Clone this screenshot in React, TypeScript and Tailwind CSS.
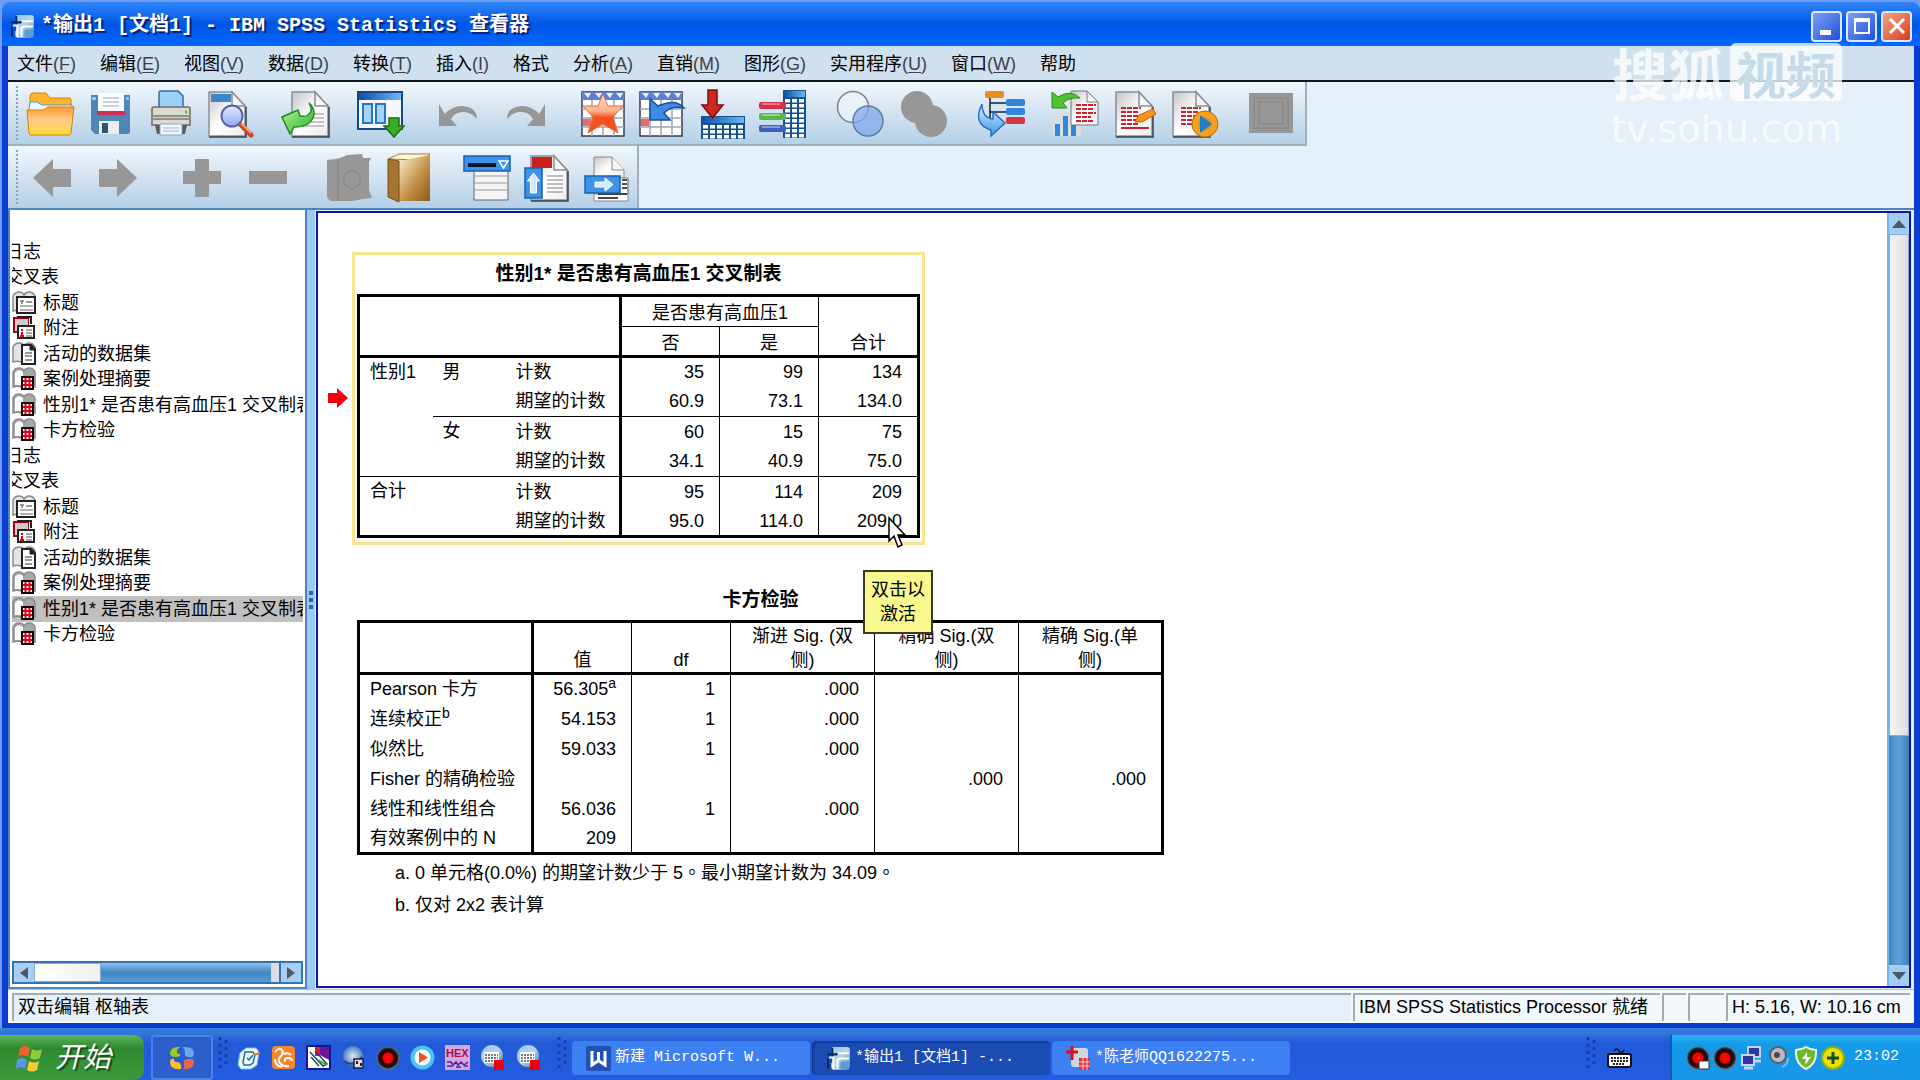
import type { ReactNode } from 'react'
import { clsx } from 'clsx'

const UI_FONT = "font-['Liberation_Sans','Noto_Sans_CJK_SC',sans-serif]"
const MONO_FONT = "font-['Liberation_Mono','Noto_Sans_CJK_SC',monospace]"
const TABLE_FONT = "font-['Liberation_Sans','Noto_Sans_CJK_TC',sans-serif]"

const MENUS: { label: string; key?: string }[] = [
  { label: '文件', key: 'F' },
  { label: '编辑', key: 'E' },
  { label: '视图', key: 'V' },
  { label: '数据', key: 'D' },
  { label: '转换', key: 'T' },
  { label: '插入', key: 'I' },
  { label: '格式' },
  { label: '分析', key: 'A' },
  { label: '直销', key: 'M' },
  { label: '图形', key: 'G' },
  { label: '实用程序', key: 'U' },
  { label: '窗口', key: 'W' },
  { label: '帮助' },
]

/* ---------- shared drawings ---------- */

function Gradients() {
  return (
    <svg width="0" height="0" className="absolute" aria-hidden="true">
      <defs>
        <linearGradient id="gOrange" x1="0" y1="0" x2="0" y2="1">
          <stop offset="0" stopColor="#ff9a2e" />
          <stop offset="0.45" stopColor="#ffc98a" />
          <stop offset="1" stopColor="#ffdf3a" />
        </linearGradient>
        <linearGradient id="gPage" x1="0" y1="0" x2="1" y2="1">
          <stop offset="0" stopColor="#c4c4c4" />
          <stop offset="0.5" stopColor="#ffffff" />
          <stop offset="1" stopColor="#ececec" />
        </linearGradient>
        <linearGradient id="gBlue" x1="0" y1="0" x2="1" y2="0">
          <stop offset="0" stopColor="#0d4fa8" />
          <stop offset="1" stopColor="#6db8f4" />
        </linearGradient>
        <linearGradient id="gSky" x1="0" y1="0" x2="0" y2="1">
          <stop offset="0" stopColor="#d8efff" />
          <stop offset="1" stopColor="#3f95ea" />
        </linearGradient>
        <linearGradient id="gGreen" x1="0" y1="0" x2="1" y2="1">
          <stop offset="0" stopColor="#b4f59a" />
          <stop offset="1" stopColor="#2fb52f" />
        </linearGradient>
        <linearGradient id="gStar" x1="0" y1="0" x2="0" y2="1">
          <stop offset="0" stopColor="#ffe2d0" />
          <stop offset="0.45" stopColor="#fbb08a" />
          <stop offset="0.6" stopColor="#f4511e" />
          <stop offset="1" stopColor="#f4511e" />
        </linearGradient>
        <linearGradient id="gBook" x1="0" y1="0" x2="1" y2="1">
          <stop offset="0" stopColor="#fff3cf" />
          <stop offset="0.6" stopColor="#c08a42" />
          <stop offset="1" stopColor="#8a5a1c" />
        </linearGradient>
        <linearGradient id="gLens" x1="0" y1="0" x2="0" y2="1">
          <stop offset="0" stopColor="#dfe8ff" />
          <stop offset="1" stopColor="#7f9df0" />
        </linearGradient>
        <linearGradient id="gAppTile" x1="0" y1="0" x2="1" y2="1">
          <stop offset="0" stopColor="#8ec8ee" />
          <stop offset="0.5" stopColor="#b9d3e2" />
          <stop offset="1" stopColor="#3c78b4" />
        </linearGradient>
        <radialGradient id="gBall">
          <stop offset="0" stopColor="#ff1010" />
          <stop offset="0.42" stopColor="#f00000" />
          <stop offset="0.55" stopColor="#2a0000" />
          <stop offset="0.8" stopColor="#161616" />
          <stop offset="1" stopColor="#777777" />
        </radialGradient>
        <radialGradient id="gGlobe">
          <stop offset="0" stopColor="#d8ecf8" />
          <stop offset="1" stopColor="#4f7fb8" />
        </radialGradient>
      </defs>
    </svg>
  )
}

function Icon({ w = 48, h = 48, children }: { w?: number; h?: number; children: ReactNode }) {
  return (
    <svg width={w} height={h} viewBox={`0 0 ${w} ${h}`} className="shrink-0" aria-hidden="true">
      {children}
    </svg>
  )
}

function Page({ x = 6 }: { x?: number }) {
  return (
    <g transform={`translate(${x} 1)`}>
      <path d="M1 1h23l13 14v30H1z" fill="url(#gPage)" stroke="#8a8f96" strokeWidth="1.5" />
      <path d="M24 1v14h13z" fill="#f6f6f6" stroke="#8a8f96" strokeWidth="1.5" />
      <path d="M1 46h37V16" fill="none" stroke="#3a3f46" strokeWidth="1.5" />
    </g>
  )
}

function AppIcon({ size = 24 }: { size?: number }) {
  return (
    <svg width={size} height={size} viewBox="0 0 24 24" className="shrink-0" aria-hidden="true">
      <rect x="5" y="1" width="18" height="22" rx="3" fill="url(#gAppTile)" />
      <path d="M1 8h10M6 2v14M2 22V12" stroke="#0a2a5c" strokeWidth="2" fill="none" />
      <path d="M3 11h4v11M11 22v-8q0-2 2-2h9M12 7h10" stroke="#fff" strokeWidth="2" fill="none" />
      <path d="M14 15h8v7h-8z" fill="#5b9bd5" />
    </svg>
  )
}

/* ---------- toolbar icons ---------- */

const FolderIcon = () => (
  <Icon w={50}>
    <path d="M4 12V6q0-2 2-3h14l4 5h19q2 0 2 2v10H4z" fill="#ffb52e" stroke="#d98200" />
    <path d="M3 19l1-7h7l5 3h30v8H3z" fill="#eaf6ff" stroke="#4a9ad6" />
    <path d="M1 20h16l5-3h26l-3 26q0 2-2 2H5q-2 0-2-2z" fill="url(#gOrange)" stroke="#d98200" />
  </Icon>
)

const SaveIcon = () => (
  <Icon w={42}>
    <path d="M1 5h39v37q0 2-2 2H5l-4-4z" fill="#4f86b8" />
    <path d="M8 3h26v20H8z" fill="#f8fbff" />
    <path d="M13 8h16M13 12h16M13 16h16" stroke="#b9c4d2" strokeWidth="1.5" />
    <path d="M7 21h28v4H7z" fill="#cf2f55" />
    <path d="M9 31h20v13H9z" fill="#e8edf2" />
    <path d="M12 33h6v10h-6z" fill="#33536f" />
    <path d="M2 7h4v3H2zM36 7h3v3h-3z" fill="#9cc4e6" />
  </Icon>
)

const PrintIcon = () => (
  <Icon w={44}>
    <path d="M10 18V3q0-2 2-2h17l5 5v12z" fill="#9bd0f8" stroke="#2e6ea5" strokeWidth="1.5" />
    <path d="M3 19q0-2 2-2h34q2 0 2 2v16H3z" fill="#d9d9cf" stroke="#6d6d66" strokeWidth="1.5" />
    <path d="M3 26h38M3 29h38" stroke="#8f8f86" strokeWidth="2" />
    <path d="M36 22h2" stroke="#5cc02a" strokeWidth="3" />
    <path d="M6 35h6v9H8zM32 35h6l-2 9h-4z" fill="#5b5b55" />
    <path d="M11 34h22v11H11z" fill="#f1f8ff" stroke="#8aa6bf" />
    <path d="M14 38h16M14 41h16" stroke="#9fb4c6" />
  </Icon>
)

const PreviewIcon = () => (
  <Icon w={50}>
    <Page x={2} />
    <path d="M5 4h20v8H5z" fill="#3d86c6" />
    <path d="M34 34l11 11" stroke="#d8401f" strokeWidth="5" strokeLinecap="round" />
    <path d="M35 33l10 10" stroke="#f7a184" strokeWidth="2" />
    <circle cx="26" cy="26" r="10.5" fill="url(#gLens)" fillOpacity="0.85" stroke="#5a62a8" strokeWidth="2" />
  </Icon>
)

const ExportIcon = () => (
  <Icon w={50}>
    <Page x={10} />
    <path d="M28 24h15M28 28h15M24 32h19M22 36h21" stroke="#b4b4b4" strokeWidth="1.5" />
    <path
      d="M28 13q5 8-1 12-3 2-8 1l-2-6L1 27l8 17 4-7q18 0 20-13 0-7-5-11z"
      fill="url(#gGreen)"
      stroke="#238a23"
      strokeWidth="1.5"
    />
  </Icon>
)

const DialogIcon = () => (
  <Icon w={50}>
    <path d="M2 2h44v37H2z" fill="#f4f8fc" stroke="#174a82" strokeWidth="2" />
    <path d="M3 3h42v7H3z" fill="url(#gBlue)" />
    <path d="M7 14h9v19H7zM20 14h9v19h-9z" fill="#a5d4fa" stroke="#2278c4" strokeWidth="2" />
    <path d="M33 28h10v8h5L38 47 28 36h5z" fill="#38ad28" stroke="#186f12" strokeWidth="1.5" />
  </Icon>
)

const UndoIcon = ({ flip = false }: { flip?: boolean }) => (
  <Icon w={44}>
    <g transform={flip ? 'translate(44 0) scale(-1 1)' : undefined}>
      <path d="M2 14v22h18l-6-7q4-7 12-7 8 0 14 7 0-12-15-13-10 0-17 8z" fill="#979797" />
    </g>
  </Icon>
)

function GridSheet() {
  return (
    <g>
      <path d="M2 2h42v44H2z" fill="#fff" stroke="#3a3a52" strokeWidth="1.5" />
      <path d="M2 2h42v8H2z" fill="#5f80cc" />
      <path d="M4 3h7l-3 5zM15 3h7l-3 5zM26 3h7l-3 5zM36 3h7l-3 5z" fill="#eef3ff" />
      <path d="M12 10v36M23 10v36M34 10v36M2 19h42M2 28h42M2 37h42" stroke="#a0a4b8" strokeWidth="1.5" />
      <path d="M3 29h8v7H3z" fill="#f06a6a" />
    </g>
  )
}

const StarIcon = () => (
  <Icon w={46}>
    <GridSheet />
    <path d="M23 4l5 12h15L33 27l5 16-15-9-15 9 5-16L3 16h15z" fill="url(#gStar)" stroke="#ee6a3a" />
  </Icon>
)

const GotoCaseIcon = () => (
  <Icon w={50}>
    <GridSheet />
    <path d="M12 9v21h20l-6-7q7-8 20-5Q38 8 20 16z" fill="#3f8be0" stroke="#1a4f9c" strokeWidth="1.5" />
  </Icon>
)

function DataGrid({ x, y, cols, rows }: { x: number; y: number; cols: number; rows: number }) {
  const w = cols * 7 + 2
  const h = rows * 5 + 8
  return (
    <g transform={`translate(${x} ${y})`}>
      <rect width={w} height={h} fill="#15508f" />
      <rect x="1" y="1" width={w - 2} height="6" fill="url(#gBlue)" />
      {Array.from({ length: cols * rows }, (_, i) => (
        <rect key={i} x={2 + (i % cols) * 7} y={9 + Math.floor(i / cols) * 5} width="5" height="3.5" fill="#fff" />
      ))}
    </g>
  )
}

const GotoVariableIcon = () => (
  <Icon w={48} h={50}>
    <DataGrid x={2} y={27} cols={6} rows={3} />
    <path d="M9 1h9v15h6L13.5 29 3 16h6z" fill="#d0281f" stroke="#7c100c" strokeWidth="1.5" />
  </Icon>
)

const VariablesIcon = () => (
  <Icon w={50} h={50}>
    <DataGrid x={25} y={1} cols={3} rows={8} />
    <rect x="1" y="13" width="27" height="7" rx="2" fill="#d9304a" />
    <rect x="1" y="24" width="27" height="7" rx="2" fill="#57b848" />
    <rect x="1" y="36" width="27" height="7" rx="2" fill="#3f5fc4" />
    <path d="M4 15h18M4 26h18M4 38h18" stroke="#fff" strokeOpacity="0.5" strokeWidth="1.5" />
  </Icon>
)

const SelectIcon = () => (
  <Icon>
    <circle cx="17" cy="17" r="15.5" fill="#eef5fb" fillOpacity="0.7" stroke="#7d848c" strokeWidth="1.5" />
    <circle cx="32" cy="31" r="15" fill="#7fa8ee" fillOpacity="0.75" stroke="#6a7c9c" strokeWidth="1.5" />
  </Icon>
)

const SelectedIcon = () => (
  <Icon>
    <circle cx="17" cy="17" r="16" fill="#979797" />
    <circle cx="31" cy="31" r="16" fill="#979797" />
  </Icon>
)

const TreeIcon = () => (
  <Icon w={50}>
    <path d="M14 6v24M14 13h18M14 22h18" stroke="#16202c" strokeWidth="1.5" fill="none" />
    <rect x="9" y="1" width="19" height="7" rx="2" fill="#ef8a1c" />
    <rect x="30" y="9" width="19" height="7" rx="2" fill="#2f86dc" />
    <rect x="30" y="18" width="19" height="7" rx="2" fill="#2f86dc" />
    <rect x="30" y="27" width="19" height="7" rx="2" fill="#d53545" />
    <path d="M6 14Q-4 34 15 40v6l14-13-12-11v7Q6 28 6 14z" fill="url(#gSky)" stroke="#2a6fc0" strokeWidth="1.5" />
  </Icon>
)

function RedText({ x, y }: { x: number; y: number }) {
  return (
    <path
      transform={`translate(${x} ${y})`}
      d="M0 0h20M0 4h17M0 8h20M0 12h15M0 16h18"
      stroke="#cf2030"
      strokeWidth="2"
      strokeDasharray="5 1"
    />
  )
}

const ChartSwapIcon = () => (
  <Icon w={50} h={50}>
    <path d="M2 24h28v23H2z" fill="#dcdcdc" />
    <path d="M4 35h5v12H4zM12 27h5v20h-5zM20 31h5v16h-5z" fill="#2f86dc" />
    <path d="M20 2h16l11 11v23H20z" fill="url(#gPage)" stroke="#777" />
    <path d="M36 2v11h11" fill="none" stroke="#777" />
    <RedText x={25} y={16} />
    <path d="M1 3v16h15l-4-5q6-6 17-5Q20 0 7 8z" fill="#52c234" stroke="#2b8a1a" />
  </Icon>
)

const EditScriptIcon = () => (
  <Icon w={44}>
    <Page x={1} />
    <RedText x={7} y={18} />
    <path d="M7 38h28" stroke="#cf2030" strokeWidth="2" />
    <path d="M21 32l4-7 14-6 3 5-14 8z" fill="#f7941d" stroke="#c96800" />
  </Icon>
)

const RunScriptIcon = () => (
  <Icon w={48}>
    <Page x={0} />
    <RedText x={9} y={18} />
    <circle cx="33" cy="34" r="13" fill="#f7a01d" stroke="#b86c00" />
    <circle cx="33" cy="34" r="7" fill="#e0912a" />
    <path d="M28 25v18l12-9z" fill="#1f7fc4" />
  </Icon>
)

const BlankIcon = () => (
  <Icon w={46}>
    <path d="M1 3h44v40H1z" fill="#979797" />
    <path d="M6 8h34v30H6zM11 12h24v22H11z" fill="none" stroke="#8c8c8c" strokeWidth="2" />
  </Icon>
)

const ArrowIcon = ({ flip = false }: { flip?: boolean }) => (
  <Icon w={40}>
    <g transform={flip ? 'translate(40 0) scale(-1 1)' : undefined}>
      <path d="M1 24L21 5v10h18v18H21v10z" fill="#979797" />
    </g>
  </Icon>
)

const PlusIcon = () => (
  <Icon w={40}>
    <path d="M13 5h14v12h12v13H27v13H13V30H1V17h12z" fill="#979797" />
  </Icon>
)

const MinusIcon = () => (
  <Icon w={40}>
    <path d="M1 17h38v13H1z" fill="#979797" />
  </Icon>
)

const GreyBookIcon = () => (
  <Icon w={46} h={50}>
    <path d="M1 7q14-1 20-5l15-1 1 4h8l-2 4v28l3 8-9 1-10 2H5q-4-2-4-6z" fill="#979797" />
    <path d="M12 8v40M18 22l8-5 8 5v9l-8 5-8-5z" fill="none" stroke="#8c8c8c" strokeWidth="2" />
  </Icon>
)

const GoldBookIcon = () => (
  <Icon w={44} h={50}>
    <path d="M1 6L12 1h31l-8 6z" fill="#fff6dc" stroke="#a87a36" />
    <path d="M12 8l31-6v46H12z" fill="url(#gBook)" />
    <path d="M1 6l11 2v41L1 44z" fill="#a5742e" stroke="#77501a" />
  </Icon>
)

const DropDocIcon = () => (
  <Icon w={48} h={48}>
    <path d="M11 14h34v32H11z" fill="#f4f4f4" stroke="#666" />
    <path d="M12 22h32M12 29h32M12 36h32" stroke="#b8b8b8" strokeWidth="1.5" />
    <path d="M1 2h46v15H1z" fill="#3d92ea" stroke="#1b5fae" strokeWidth="1.5" />
    <path d="M5 9h28v4H5z" fill="#06152c" />
    <path d="M36 7h9l-4.5 7z" fill="#3d92ea" stroke="#fff" strokeWidth="1.5" />
  </Icon>
)

const HeadingDocIcon = () => (
  <Icon w={46} h={48}>
    <Page x={6} />
    <path d="M8 3h20v11H8z" fill="#c9201f" />
    <path d="M23 22h16M23 26h16M23 30h16M23 34h16M23 38h16" stroke="#a8a8a8" strokeWidth="1.5" />
    <path d="M1 14h17v30H1z" fill="#3d92ea" stroke="#1b5fae" strokeWidth="1.5" />
    <path d="M9.5 19l6 8h-3v12h-6V27h-3z" fill="#cfeaff" stroke="#fff" />
  </Icon>
)

const InsertDocIcon = () => (
  <Icon w={46} h={48}>
    <path d="M10 3h18l12 13v8H10z" fill="url(#gPage)" stroke="#888" />
    <path d="M28 3v13h12" fill="#f6f6f6" stroke="#888" />
    <path d="M10 40h34V24h-8M10 40v7h34V24" fill="#fff" stroke="#888" />
    <path d="M38 26h5M38 30h5M38 34h5M14 40h29M14 44h20" stroke="#111" strokeWidth="1.5" />
    <path d="M1 22h35v17H1z" fill="#3d92ea" stroke="#1b5fae" strokeWidth="1.5" />
    <path d="M11 28h10v-4l8 6.5-8 6.5v-4H11z" fill="#cfeaff" stroke="#fff" />
  </Icon>
)

interface Tool {
  name: string
  icon: ReactNode
  disabled?: boolean
}

interface ToolGroup {
  width: string
  tools: Tool[]
}

const MAIN_TOOLS: ToolGroup[] = [
  {
    width: 'w-[60px]',
    tools: [
      { name: '打开', icon: <FolderIcon /> },
      { name: '保存', icon: <SaveIcon /> },
      { name: '打印', icon: <PrintIcon /> },
      { name: '打印预览', icon: <PreviewIcon /> },
    ],
  },
  { width: 'w-[60px]', tools: [{ name: '导出', icon: <ExportIcon /> }] },
  { width: 'w-[60px]', tools: [{ name: '重新调用对话框', icon: <DialogIcon /> }] },
  {
    width: 'w-[66px]',
    tools: [
      { name: '撤消', icon: <UndoIcon />, disabled: true },
      { name: '重做', icon: <UndoIcon flip />, disabled: true },
    ],
  },
  {
    width: 'w-[60px]',
    tools: [
      { name: '转至数据', icon: <StarIcon /> },
      { name: '转至个案', icon: <GotoCaseIcon /> },
      { name: '转至变量', icon: <GotoVariableIcon /> },
      { name: '变量', icon: <VariablesIcon /> },
    ],
  },
  {
    width: 'w-16',
    tools: [
      { name: '使用变量集', icon: <SelectIcon /> },
      { name: '显示所有变量', icon: <SelectedIcon />, disabled: true },
    ],
  },
  { width: 'w-[60px]', tools: [{ name: '选择上次输出', icon: <TreeIcon /> }] },
  {
    width: 'w-[60px]',
    tools: [
      { name: '关联自动脚本', icon: <ChartSwapIcon /> },
      { name: '编辑脚本', icon: <EditScriptIcon /> },
      { name: '运行脚本', icon: <RunScriptIcon /> },
    ],
  },
  { width: 'w-[60px]', tools: [{ name: '指定窗口', icon: <BlankIcon />, disabled: true }] },
]

const OUTLINE_TOOLS: ToolGroup[] = [
  {
    width: 'w-[66px]',
    tools: [
      { name: '升级', icon: <ArrowIcon />, disabled: true },
      { name: '降级', icon: <ArrowIcon flip />, disabled: true },
    ],
  },
  {
    width: 'w-[66px]',
    tools: [
      { name: '展开', icon: <PlusIcon />, disabled: true },
      { name: '折叠', icon: <MinusIcon />, disabled: true },
    ],
  },
  {
    width: 'w-[60px]',
    tools: [
      { name: '显示', icon: <GreyBookIcon />, disabled: true },
      { name: '隐藏', icon: <GoldBookIcon /> },
    ],
  },
  {
    width: 'w-[60px]',
    tools: [
      { name: '插入标题', icon: <DropDocIcon /> },
      { name: '插入页标题', icon: <HeadingDocIcon /> },
      { name: '插入文本', icon: <InsertDocIcon /> },
    ],
  },
]

function Toolbar({ groups, className }: { groups: ToolGroup[]; className: string }) {
  return (
    <div role="toolbar" className={clsx('flex items-center border-r-2 border-[#9fb0c0] pt-0.5', className)}>
      {groups.map((group, i) => (
        <div key={i} className="flex">
          {group.tools.map((tool) => (
            <button
              key={tool.name}
              type="button"
              aria-label={tool.name}
              disabled={tool.disabled}
              className={clsx('flex h-14 items-center justify-center', group.width)}
            >
              {tool.icon}
            </button>
          ))}
        </div>
      ))}
    </div>
  )
}

const Grip = () => (
  <div className="my-1 ml-1.5 w-1 self-stretch border-r-2 border-dotted border-[#8fa3b5]" />
)

/* ---------- outline pane ---------- */

type NodeKind = 'title' | 'notes' | 'log' | 'table'

const OUTLINE_BLOCK: { kind?: NodeKind; text: string }[] = [
  { text: '日志' },
  { text: '交叉表' },
  { kind: 'title', text: '标题' },
  { kind: 'notes', text: '附注' },
  { kind: 'log', text: '活动的数据集' },
  { kind: 'table', text: '案例处理摘要' },
  { kind: 'table', text: '性别1* 是否患有高血压1 交叉制表' },
  { kind: 'table', text: '卡方检验' },
]
const OUTLINE = [...OUTLINE_BLOCK, ...OUTLINE_BLOCK]
const SELECTED_ROW = 14

function NodeIcon({ kind }: { kind: NodeKind }) {
  return (
    <svg width="25" height="24" viewBox="0 0 25 24" className="shrink-0" aria-hidden="true">
      {kind === 'notes' ? (
        <>
          <path d="M2 2h14v14H2z" fill="#f4c8c8" stroke="#a00018" strokeWidth="2" />
          <path d="M5 1h14v7" fill="none" stroke="#222" strokeWidth="2" />
          <path d="M5 3h11v6H5z" fill="#ccc" />
          <path d="M6 10h16v12H6z" fill="#fff" stroke="#222" strokeWidth="2" />
          <path d="M10 13v2M10 16v4M8 20h4" stroke="#e00010" strokeWidth="2" />
          <path d="M14 14h6M14 17h6M14 20h6" stroke="#888" strokeWidth="1.5" />
        </>
      ) : (
        <path
          d="M1 20V5q2-4 6-4t5 3q2-3 5-3 4 0 6 4v15q-5-3-11 1-6-3-11-1z"
          fill={kind === 'table' ? '#a8a8a8' : '#e4e4e4'}
          stroke="#8a8a8a"
          strokeWidth="1.5"
        />
      )}
      {kind === 'title' && (
        <>
          <path d="M5 6h18v16H5z" fill="#fff" stroke="#222" strokeWidth="2" />
          <path d="M8 10h4M10 10v3M14 11h6" stroke="#777" strokeWidth="1.5" />
          <path d="M8 15h13M8 19h13" stroke="#999" strokeWidth="1.5" />
        </>
      )}
      {kind === 'log' && (
        <>
          <path d="M10 3h9l4 4v15H10z" fill="#fff" stroke="#222" strokeWidth="2" />
          <path d="M18 3v5h5" fill="#222" stroke="#222" />
          <path d="M13 11h7M13 14h7M13 18h7" stroke="#777" strokeWidth="1.5" />
        </>
      )}
      {kind === 'table' && (
        <>
          <path d="M3 6q3-5 8-1v13H3z" fill="#fff" />
          <path d="M10 10h11v12H10z" fill="#fff" stroke="#1a0808" strokeWidth="2" />
          <path d="M13.5 11v10M17.5 11v10M11 14h9M11 18h9" stroke="#e80018" strokeWidth="2" />
        </>
      )}
    </svg>
  )
}

function OutlinePane() {
  return (
    <div className="flex w-[299px] shrink-0 flex-col border-2 border-[#4a86c0] bg-white px-0.5">
      <ul className="mt-[29px] flex h-[408px] flex-col overflow-hidden">
        {OUTLINE.map((node, i) => (
          <li
            key={i}
            className={clsx(
              'flex flex-1 items-center gap-1.5 overflow-hidden whitespace-nowrap text-[18px] leading-[24px]',
              i === SELECTED_ROW && 'bg-[#c0c0c0]',
            )}
          >
            {node.kind ? <NodeIcon kind={node.kind} /> : null}
            <span className={node.kind ? '' : '-ml-[7px]'}>{node.text}</span>
          </li>
        ))}
      </ul>
      <div className="flex-1" />
      <div className="mb-[3px] flex h-[23px] border-2 border-[#3374b4] bg-[#b4d4ee]">
        <button type="button" aria-label="向左滚动" className="flex w-5 items-center justify-center bg-[#a9cff0]">
          <Icon w={8} h={12}>
            <path d="M8 0v12L0 6z" fill="#4a5a68" />
          </Icon>
        </button>
        <div className="w-[67px] border border-[#7db0de] bg-linear-to-r from-white to-[#f0f0f0]" />
        <div className="flex-1 bg-linear-to-b from-[#8fbfe6] via-[#3f86c4] to-[#5c9cd2]" />
        <div className="w-2.5 border-r-2 border-[#3374b4] bg-[#dcdce0]" />
        <button type="button" aria-label="向右滚动" className="flex w-5 items-center justify-center bg-[#a9cff0]">
          <Icon w={8} h={12}>
            <path d="M0 0v12l8-6z" fill="#4a5a68" />
          </Icon>
        </button>
      </div>
    </div>
  )
}

/* ---------- output tables ---------- */

const CROSS_ROWS: { group?: string; groupSpan?: number; sub?: string; label: string; values: string[] }[] = [
  { group: '性别1', groupSpan: 4, sub: '男', label: '计数', values: ['35', '99', '134'] },
  { label: '期望的计数', values: ['60.9', '73.1', '134.0'] },
  { sub: '女', label: '计数', values: ['60', '15', '75'] },
  { label: '期望的计数', values: ['34.1', '40.9', '75.0'] },
  { group: '合计', groupSpan: 2, sub: ' ', label: '计数', values: ['95', '114', '209'] },
  { label: '期望的计数', values: ['95.0', '114.0', '209.0'] },
]

function CrossTable() {
  return (
    <table className="w-[560px] table-fixed border-collapse border-[3px] border-black text-[18px] leading-[24px]">
      <caption className="h-[39px] text-[19px] leading-[38px] font-bold">性别1* 是否患有高血压1 交叉制表</caption>
      <colgroup>
        <col className="w-[74px]" />
        <col className="w-[73px]" />
        <col className="w-[115px]" />
        <col className="w-[99px]" />
        <col className="w-[99px]" />
        <col className="w-[100px]" />
      </colgroup>
      <thead>
        <tr className="h-[31px]">
          <td colSpan={3} rowSpan={2} className="border-r-[3px] border-black" />
          <th colSpan={2} className="border-b border-black p-0 pt-0.5 font-normal">
            是否患有高血压1
          </th>
          <th rowSpan={2} className="border-l border-black p-0 align-bottom font-normal">
            合计
          </th>
        </tr>
        <tr className="h-[30px] border-b-[3px] border-black">
          <th className="p-0 pt-1 font-normal">否</th>
          <th className="border-l border-black p-0 pt-1 font-normal">是</th>
        </tr>
      </thead>
      <tbody>
        {CROSS_ROWS.map((row, i) => {
          const topRule = i === 2 || i === 4
          const rule = topRule && 'border-t border-black'
          return (
            <tr key={i} className="h-[30px]">
              {row.group && (
                <th rowSpan={row.groupSpan} className={clsx('p-0 pt-0.5 pl-2.5 text-left align-top font-normal', i > 0 && rule)}>
                  {row.group}
                </th>
              )}
              {row.sub && (
                <th rowSpan={2} className={clsx('p-0 pt-0.5 pl-2.5 text-left align-top font-normal', rule)}>
                  {row.sub}
                </th>
              )}
              <th className={clsx('border-r-[3px] border-black p-0 pl-2.5 text-left font-normal', rule)}>{row.label}</th>
              {row.values.map((value, n) => (
                <td key={n} className={clsx('p-0 pr-[15px] text-right', n > 0 && 'border-l border-black', rule)}>
                  {value}
                </td>
              ))}
            </tr>
          )
        })}
      </tbody>
    </table>
  )
}

const CHI_HEAD = ['值', 'df', '渐进 Sig. (双侧)', '精确 Sig.(双侧)', '精确 Sig.(单侧)']

const CHI_ROWS: { label: string; labelNote?: string; values: string[]; note?: string }[] = [
  { label: 'Pearson 卡方', values: ['56.305', '1', '.000', '', ''], note: 'a' },
  { label: '连续校正', labelNote: 'b', values: ['54.153', '1', '.000', '', ''] },
  { label: '似然比', values: ['59.033', '1', '.000', '', ''] },
  { label: 'Fisher 的精确检验', values: ['', '', '', '.000', '.000'] },
  { label: '线性和线性组合', values: ['56.036', '1', '.000', '', ''] },
  { label: '有效案例中的 N', values: ['209', '', '', '', ''] },
]

const Note = ({ children }: { children: ReactNode }) => (
  <sup className="text-[14px] leading-none">{children}</sup>
)

function ChiTable() {
  return (
    <table className="w-[806px] table-fixed border-collapse border-[3px] border-black text-[18px] leading-[24px]">
      <caption className="h-10 text-[19px] leading-[40px] font-bold">卡方检验</caption>
      <colgroup>
        <col className="w-[174px]" />
        <col className="w-[99px]" />
        <col className="w-[99px]" />
        <col className="w-36" />
        <col className="w-36" />
        <col className="w-36" />
      </colgroup>
      <thead>
        <tr className="h-[52px] border-b-[3px] border-black">
          <td className="border-r-[3px] border-black" />
          {CHI_HEAD.map((head, i) => (
            <th key={head} className={clsx('p-0 px-4 align-bottom font-normal', i > 0 && 'border-l border-black')}>
              {head}
            </th>
          ))}
        </tr>
      </thead>
      <tbody>
        {CHI_ROWS.map((row) => (
          <tr key={row.label} className="h-[30px]">
            <th className="border-r-[3px] border-black p-0 pl-2.5 text-left font-normal whitespace-nowrap">
              {row.label}
              {row.labelNote && <Note>{row.labelNote}</Note>}
            </th>
            {row.values.map((value, i) => (
              <td key={i} className={clsx('p-0 pr-[15px] text-right', i > 0 && 'border-l border-black')}>
                {value}
                {i === 0 && row.note && <Note>{row.note}</Note>}
              </td>
            ))}
          </tr>
        ))}
      </tbody>
    </table>
  )
}

function OutputPane() {
  return (
    <div className="flex min-w-0 flex-1 flex-col border-t-2 border-[#4a86c0] bg-[#e0f0fb] p-px pr-[3px]">
      <div className="flex flex-1 border-2 border-[#1414a0] bg-white">
        <div className={clsx('min-w-0 flex-1 pt-[39px] pl-[34px]', TABLE_FONT)}>
          <div className="relative w-fit border-[3px] border-[#fbe48e] px-0.5 pb-1">
            <CrossTable />
            <svg width="20" height="20" viewBox="0 0 20 20" className="absolute top-[133px] -left-[27px]" aria-hidden="true">
              <path d="M0 5h9V0l11 10L9 20v-5H0z" fill="#f00010" />
            </svg>
            <svg width="18" height="34" viewBox="0 0 18 34" className="absolute top-[261px] left-[533px] z-10" aria-hidden="true">
              <path d="M1 2v23l5-5 4 11 4-2-4-10h7z" fill="#fff" stroke="#000" strokeWidth="1.5" />
            </svg>
            <div
              role="tooltip"
              className={clsx(
                'absolute top-[315px] left-[508px] z-10 w-[70px] border-2 border-[#3a3a20] bg-[#f8f88e] px-1 py-1.5 text-center text-[18px] leading-[24px]',
                UI_FONT,
              )}
            >
              双击以激活
            </div>
          </div>
          <div className="mt-[35px] ml-[5px]">
            <ChiTable />
            <ol className="mt-0.5 pl-[38px] text-[18px] leading-[32px]">
              <li>a. 0 单元格(0.0%) 的期望计数少于 5。最小期望计数为 34.09。</li>
              <li>b. 仅对 2x2 表计算</li>
            </ol>
          </div>
        </div>
        <div className="flex w-[22px] flex-col border-l-2 border-[#6fb4ee]">
          <button type="button" aria-label="向上滚动" className="flex h-[21px] items-center justify-center bg-[#a4cdf2]">
            <Icon w={14} h={8}>
              <path d="M0 8h14L7 0z" fill="#4a5a68" />
            </Icon>
          </button>
          <div className="flex-2 basis-[501px] border border-[#7db0de] bg-linear-to-r from-[#f6f3f3] to-[#dfdde2]" />
          <div className="shrink-0 grow basis-[228px] bg-linear-to-r from-[#4384c0] via-[#5fa3dc] to-[#3f7db8]" />
          <button type="button" aria-label="向下滚动" className="flex h-[21px] items-center justify-center bg-[#a4cdf2]">
            <Icon w={14} h={8}>
              <path d="M0 0h14L7 8z" fill="#4a5a68" />
            </Icon>
          </button>
        </div>
      </div>
    </div>
  )
}

/* ---------- window frame ---------- */

function TitleBar() {
  const button = 'flex h-[31px] w-[31px] items-center justify-center rounded-[4px] border-2 border-[#dce8ff]'
  return (
    <header className="flex h-11 items-center gap-1.5 rounded-t-lg bg-linear-to-b from-[#2f86f8] via-[#0055e5] to-[#0068ff] pt-1 pr-2 pl-2">
      <AppIcon size={25} />
      <h1 className={clsx('flex-1 text-[20px] font-bold text-white text-shadow-[2px_2px_1px_#0a1f6c]', MONO_FONT)}>
        *输出1 [文档1] - IBM SPSS Statistics 查看器
      </h1>
      <div className="flex gap-1">
        <button type="button" aria-label="最小化" className={clsx(button, 'bg-linear-to-br from-[#7f9df0] to-[#1c4fd8]')}>
          <Icon w={20} h={20}>
            <path d="M3 14h11v5H3z" fill="#fff" />
          </Icon>
        </button>
        <button type="button" aria-label="最大化" className={clsx(button, 'bg-linear-to-br from-[#7f9df0] to-[#1c4fd8]')}>
          <Icon w={20} h={20}>
            <path d="M3 3h14v14H3z" fill="none" stroke="#fff" strokeWidth="2" />
            <path d="M2 2h16v4H2z" fill="#fff" />
          </Icon>
        </button>
        <button type="button" aria-label="关闭" className={clsx(button, 'bg-linear-to-br from-[#f0a084] to-[#d8380c]')}>
          <Icon w={20} h={20}>
            <path d="M3 3l14 14M17 3L3 17" stroke="#fff" strokeWidth="3" />
          </Icon>
        </button>
      </div>
    </header>
  )
}

function MenuBar() {
  return (
    <nav className="flex h-9 items-center gap-6 border-b-2 border-[#101820] bg-[#cfe1ef] pt-0.5 pl-[9px] text-[18px] leading-[24px]">
      {MENUS.map((menu) => (
        <button key={menu.label} type="button">
          {menu.label}
          {menu.key && (
            <span className="text-[#3c4248]">
              (<u className="underline-offset-2">{menu.key}</u>)
            </span>
          )}
        </button>
      ))}
    </nav>
  )
}

function Watermark() {
  return (
    <div className="pointer-events-none absolute top-[41px] right-[78px] z-20 flex flex-col items-end text-white/75">
      <div className="flex items-center gap-1.5 font-['Noto_Sans_CJK_SC',sans-serif] font-bold">
        <span className="text-[56px] leading-[58px]">搜狐</span>
        <span className="rounded-[6px] bg-white/75 px-1.5 text-[50px] leading-[58px] text-[#c6dbea]">视频</span>
      </div>
      <span className="mt-1 font-['DejaVu_Sans',sans-serif] text-[38px] leading-[48px]">tv.sohu.com</span>
    </div>
  )
}

function StatusBar() {
  const cell = 'h-7 border-t-2 border-l-2 border-[#a3abb3] pl-1'
  return (
    <footer className="flex h-[34px] items-center gap-0.5 border-t border-[#b8c4d0] bg-[#f3f8fd] px-1 text-[18px] leading-[24px] whitespace-nowrap">
      <div className={clsx(cell, 'flex-1 bg-[#e6f0fa]')}>双击编辑 枢轴表</div>
      <div className={clsx(cell, 'w-[307px]')}>IBM SPSS Statistics Processor 就绪</div>
      <div className={clsx(cell, 'w-6')} />
      <div className={clsx(cell, 'w-9')} />
      <div className={clsx(cell, 'w-[184px]')}>H: 5.16, W: 10.16 cm</div>
    </footer>
  )
}

/* ---------- taskbar ---------- */

const RedBall = ({ badge = false }: { badge?: boolean }) => (
  <Icon w={24} h={24}>
    <circle cx="12" cy="12" r="11.5" fill="url(#gBall)" />
    {badge && <path d="M13 15h10v8H13z" fill="#fff" stroke="#333" />}
  </Icon>
)

const CalendarIcon = () => (
  <Icon w={26} h={26}>
    <circle cx="12" cy="11" r="11" fill="url(#gAppTile)" />
    <path d="M4 7h15v11H4z" fill="#fff" />
    <path d="M5 10h13M5 13h13M5 16h13" stroke="#456" strokeWidth="1.5" strokeDasharray="2 1" />
    <path d="M14 15h10v10H14z" fill="#e8000c" />
  </Icon>
)

const QUICK_LAUNCH: { name: string; icon: ReactNode }[] = [
  {
    name: '便签',
    icon: (
      <Icon w={24} h={24}>
        <path d="M3 7l6-5h10l3 4-2 13-6 4H4L1 19z" fill="#eefaff" stroke="#7ac0e0" />
        <path d="M8 6h8l2 3-2 8-3 2H7l-1-3zM10 12l2 2 4-5" fill="none" stroke="#1d6fa0" strokeWidth="1.5" />
        <path d="M17 9l6-2" stroke="#e87020" strokeWidth="2" />
      </Icon>
    ),
  },
  {
    name: 'UC浏览器',
    icon: (
      <Icon w={25} h={25}>
        <rect x="1" y="1" width="23" height="23" rx="4" fill="#f6862a" />
        <path
          d="M4 7q4-5 7-2 2 3-1 6-4 4-1 7 3 4 9 3M13 9q4-2 7 1M14 17q-1-4 3-4t4 3M4 14q0 7 7 8"
          fill="none"
          stroke="#fff"
          strokeWidth="2"
        />
      </Icon>
    ),
  },
  {
    name: '画板',
    icon: (
      <Icon w={25} h={25}>
        <path d="M1 1h23v23H1z" fill="#fff" stroke="#14149c" strokeWidth="2" />
        <path d="M9 2h14v13L12 9z" fill="#6a1a98" />
        <path d="M9 2h5v9H9z" fill="#e81838" />
        <path d="M4 7l13 14 4-2L9 6M5 12l8 9" fill="none" stroke="#246" strokeWidth="1.5" />
        <path d="M12 15l9 5" stroke="#3a4" strokeWidth="2" />
      </Icon>
    ),
  },
  {
    name: '网络',
    icon: (
      <Icon w={25} h={25}>
        <circle cx="12" cy="11" r="10" fill="url(#gGlobe)" />
        <path d="M3 16q9 7 18-4" fill="none" stroke="#234a80" strokeWidth="2" />
        <path d="M13 14h9v9h-9z" fill="#dde" stroke="#223" strokeWidth="1.5" />
        <path d="M15 16h2v3h-2zM19 18h2v3h-2z" fill="#223" />
      </Icon>
    ),
  },
  { name: '录像', icon: <RedBall /> },
  {
    name: '播放器',
    icon: (
      <Icon w={25} h={25}>
        <circle cx="12.5" cy="12.5" r="10" fill="#fff" stroke="#4cc4f0" strokeWidth="4" />
        <path d="M9 7v11l9-5.5z" fill="#f0502c" />
      </Icon>
    ),
  },
  {
    name: 'HEX',
    icon: (
      <Icon w={25} h={25}>
        <path d="M0 0h25v25H0z" fill="#d9a4e6" />
        <text x="1" y="12" fontSize="11" fontWeight="bold" fill="#a3123c">
          HEX
        </text>
        <path d="M2 17h4l2 3 3-3 2 3 3-3 3 3 4-3M2 21h6M11 22h5M19 21h4" fill="none" stroke="#4a2a8c" strokeWidth="1.5" />
      </Icon>
    ),
  },
  { name: '日程', icon: <CalendarIcon /> },
  { name: '日程 2', icon: <CalendarIcon /> },
]

const TASKS: { title: string; icon: ReactNode; active?: boolean }[] = [
  {
    title: '新建 Microsoft W...',
    icon: (
      <Icon w={25} h={25}>
        <rect width="25" height="25" rx="2" fill="#2250b4" />
        <path d="M6 5v14l6-4 1 0 6 4V5M12.5 6v9" fill="none" stroke="#fff" strokeWidth="3" />
      </Icon>
    ),
  },
  { title: '*输出1 [文档1] -...', icon: <AppIcon size={25} />, active: true },
  {
    title: '*陈老师QQ1622275...',
    icon: (
      <Icon w={25} h={25}>
        <rect x="5" y="2" width="17" height="19" rx="3" fill="#cfd6dc" />
        <path d="M0 6h12M6 0v14" stroke="#d8101c" strokeWidth="3" />
        <path d="M13 12h11v12H13z" fill="#e0303a" />
        <path d="M17 12v12M21 12v12M13 16h11M13 20h11" stroke="#ffc8c8" />
      </Icon>
    ),
  },
]

const TRAY: { name: string; icon: ReactNode }[] = [
  { name: '录制暂停', icon: <RedBall badge /> },
  { name: '录制', icon: <RedBall /> },
  {
    name: '网络连接',
    icon: (
      <Icon w={24} h={24}>
        <path d="M8 1h12v10H8z" fill="#2c3c9c" stroke="#c8d0f0" strokeWidth="2" />
        <path d="M2 9h12v10H2z" fill="#2c3c9c" stroke="#c8d0f0" strokeWidth="2" />
        <path d="M4 22h9M15 15h6" stroke="#c8d0f0" strokeWidth="3" />
      </Icon>
    ),
  },
  {
    name: '音量',
    icon: (
      <Icon w={24} h={24}>
        <circle cx="11" cy="9" r="8" fill="#b8bcc0" stroke="#5a6068" strokeWidth="2" />
        <circle cx="10" cy="9" r="3" fill="#444a50" />
        <path d="M15 21q6-2 6-9" fill="none" stroke="#7fb8f0" strokeWidth="2" />
      </Icon>
    ),
  },
  {
    name: '安全卫士',
    icon: (
      <Icon w={24} h={24}>
        <path d="M12 1q5 3 10 3 1 14-10 19Q1 18 2 4q5 0 10-3z" fill="#6db82a" stroke="#f4ffe0" strokeWidth="2" />
        <path d="M13 6l-5 7h4l-1 6 6-8h-4z" fill="#fff" />
      </Icon>
    ),
  },
  {
    name: '加速球',
    icon: (
      <Icon w={24} h={24}>
        <circle cx="12" cy="12" r="11" fill="#f0e000" stroke="#88b018" strokeWidth="2" />
        <path d="M12 6v12M6 12h12" stroke="#14501c" strokeWidth="3" />
      </Icon>
    ),
  },
]

const Dots = () => (
  <Icon w={12} h={34}>
    <path d="M3 2v32M9 5v28" stroke="#143ea8" strokeWidth="3" strokeDasharray="3 4" />
  </Icon>
)

function Taskbar() {
  return (
    <div className="flex h-[52px] items-stretch bg-linear-to-b from-[#3a82de] via-[#2359d8] via-30% to-[#245ce0] pt-[7px]">
      <button
        type="button"
        className="flex w-[144px] items-center gap-2.5 rounded-r-[10px] bg-linear-to-b from-[#5cb45c] via-[#2f8a2f] via-30% to-[#3c9a3c] pl-[15px] text-white"
      >
        <Icon w={30} h={32}>
          <path d="M5 6q5-4 10 0l-2 9q-5-4-10 0z" fill="#f0622c" />
          <path d="M17 7q5 3 10 0l-2 9q-5 3-10 0z" fill="#8ccc3c" />
          <path d="M2 18q5-4 10 0l-2 9q-4-4-9 0z" fill="#5c94f0" />
          <path d="M14 19q5 3 10 0l-2 9q-5 3-10 0z" fill="#f8cc34" />
        </Icon>
        <span className="text-[28px] leading-[32px] italic text-shadow-[2px_2px_1px_#1c4a1c]">开始</span>
      </button>
      <button
        type="button"
        aria-label="输入法"
        className="mr-1 ml-[7px] flex w-[62px] items-center justify-center rounded-[3px] border-2 border-[#4c84e4] bg-[#2c5fcc]"
      >
        <Icon w={26} h={26}>
          <path d="M11 2Q2 1 1 8q0 4 5 4 6 0 5-3-4 0-3-3 1-3 3-4z" fill="#9ccc1c" />
          <path d="M14 2q10-1 11 6 0 5-5 4-5 0-4-4 0-3-2-6z" fill="#6ca8ec" />
          <path d="M12 24Q2 25 1 18q0-5 4-4 0 4 4 3 4 2 3 7z" fill="#fcc02c" />
          <path d="M14 24q10 1 11-6 0-5-5-4-6 0-5 4 1 4-1 6z" fill="#f0644c" />
        </Icon>
      </button>
      <Dots />
      <div className="flex items-center gap-[10px] pl-2">
        {QUICK_LAUNCH.map((item) => (
          <button key={item.name} type="button" aria-label={item.name}>
            {item.icon}
          </button>
        ))}
      </div>
      <div className="ml-3.5 flex">
        <Dots />
      </div>
      <div className="flex min-w-0 flex-1 gap-0.5 pt-1.5 pb-[5px] pl-1">
        {TASKS.map((task) => (
          <button
            key={task.title}
            type="button"
            className={clsx(
              'flex w-[238px] items-center gap-1 rounded-[4px] pl-3.5 text-[15px] whitespace-nowrap text-white',
              MONO_FONT,
              task.active ? 'bg-[#1b4cb4] shadow-[inset_2px_2px_2px_#143a90]' : 'bg-[#3c80f2]',
            )}
          >
            {task.icon}
            {task.title}
          </button>
        ))}
      </div>
      <Dots />
      <button type="button" aria-label="键盘" className="mr-[38px] ml-2.5">
        <Icon w={25} h={22}>
          <path d="M7 4q3-4 5 0t5-1" fill="none" stroke="#111" strokeWidth="1.5" />
          <rect x="1" y="7" width="23" height="13" rx="2" fill="#fff" stroke="#111" strokeWidth="2" />
          <path d="M4 11h17M4 14h17M6 17h12" stroke="#222" strokeWidth="2" strokeDasharray="2 1" />
        </Icon>
      </button>
      <div className="flex w-[250px] items-center gap-[3px] border-l-2 border-[#0c5cc0] bg-linear-to-b from-[#2cb0f4] via-[#129ae8] via-20% to-[#1896e8] pl-3.5">
        {TRAY.map((item) => (
          <button key={item.name} type="button" aria-label={item.name}>
            {item.icon}
          </button>
        ))}
        <time className={clsx('pl-1.5 text-[15px] text-white', MONO_FONT)}>23:02</time>
      </div>
    </div>
  )
}

export default function App() {
  return (
    <div className={clsx('flex min-h-screen flex-col bg-[#6f9cf0] pt-0.5 text-black', UI_FONT)}>
      <Gradients />
      <div className="relative flex flex-1 flex-col">
        <div className="flex flex-1 flex-col pl-0.5">
          <TitleBar />
          <div className="flex flex-1 flex-col border-x-[6px] border-b-[5px] border-[#0a3cd0] bg-[#e5f0fa]">
            <MenuBar />
            <div className="flex h-16 w-fit border-b-2 border-[#9fb0c0] bg-linear-to-b from-[#f0f7fd] via-[#d3e3f1] to-[#b3d0e7]">
              <Grip />
              <Toolbar groups={MAIN_TOOLS} className="gap-[15px] pr-1 pl-[3px]" />
            </div>
            <div className="flex h-[62px] w-fit bg-linear-to-b from-[#f0f7fd] via-[#d3e3f1] to-[#b3d0e7]">
              <Grip />
              <Toolbar groups={OUTLINE_TOOLS} className="gap-[18px] pl-px" />
            </div>
            <main className="flex flex-1">
              <OutlinePane />
              <div className="flex w-2 items-center justify-center border-t-2 border-[#4a86c0] bg-[#9ccbf2]">
                <Icon w={6} h={20}>
                  <path d="M3 1v18" stroke="#2c64b0" strokeWidth="4" strokeDasharray="4 3" />
                </Icon>
              </div>
              <OutputPane />
            </main>
            <StatusBar />
          </div>
        </div>
        <Watermark />
      </div>
      <Taskbar />
    </div>
  )
}
